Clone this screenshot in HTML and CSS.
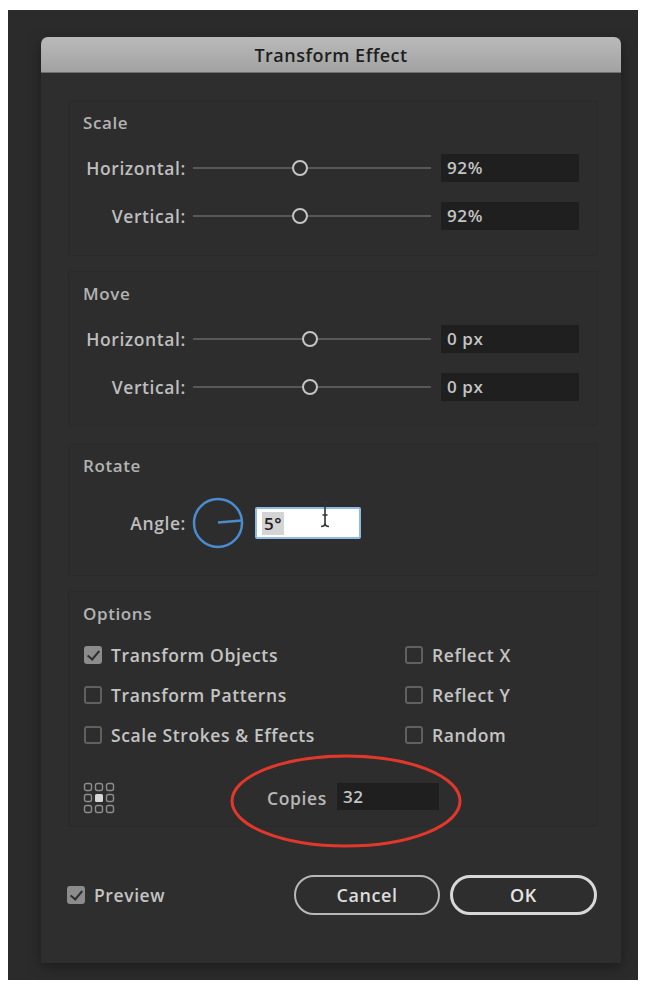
FILE: index.html
```html
<!DOCTYPE html>
<html lang="en">
<head>
  <meta charset="UTF-8" />
  <title>Transform Effect</title>
  <link rel="stylesheet" href="styles.css">
</head>
<body>

  <div class="frame">
    <div class="dialog">
      <div class="titlebar">Transform Effect</div>

      <div class="content">

        <!-- Scale -->
        <section class="panel panel-scale">
          <div class="panel-title">Scale</div>
          <div class="row">
            <span class="row-label">Horizontal:</span>
            <div class="slider"><span class="thumb" style="left: 45%"></span></div>
            <div class="field">92%</div>
          </div>
          <div class="row">
            <span class="row-label">Vertical:</span>
            <div class="slider"><span class="thumb" style="left: 45%"></span></div>
            <div class="field">92%</div>
          </div>
        </section>

        <!-- Move -->
        <section class="panel panel-move">
          <div class="panel-title">Move</div>
          <div class="row">
            <span class="row-label">Horizontal:</span>
            <div class="slider"><span class="thumb" style="left: 49%"></span></div>
            <div class="field">0 px</div>
          </div>
          <div class="row">
            <span class="row-label">Vertical:</span>
            <div class="slider"><span class="thumb" style="left: 49%"></span></div>
            <div class="field">0 px</div>
          </div>
        </section>

        <!-- Rotate -->
        <section class="panel panel-rotate">
          <div class="panel-title">Rotate</div>
          <div class="angle-row">
            <span class="row-label">Angle:</span>
            <svg class="dial" width="52" height="52" viewBox="0 0 52 52">
              <circle cx="26" cy="26" r="24" fill="none" stroke="#4b8bd0" stroke-width="2.5"/>
              <line x1="26" y1="25.5" x2="50" y2="23.5" stroke="#4b8bd0" stroke-width="2.5"/>
            </svg>
            <div class="angle-field">
              <span class="selected">5°</span>
              <svg class="ibeam" width="12" height="28" viewBox="0 0 12 28">
                <path d="M2 1.5 Q6 1.5 6 5 Q6 1.5 10 1.5 M6 5 V23 M2 26.5 Q6 26.5 6 23 Q6 26.5 10 26.5 M3.5 15 H8.5" fill="none" stroke="#333" stroke-width="1.6"/>
              </svg>
            </div>
          </div>
        </section>

        <!-- Options -->
        <section class="panel panel-options">
          <div class="panel-title">Options</div>
          <div class="options-grid">
            <label class="check"><span class="box checked"></span>Transform Objects</label>
            <label class="check"><span class="box"></span>Reflect X</label>
            <label class="check"><span class="box"></span>Transform Patterns</label>
            <label class="check"><span class="box"></span>Reflect Y</label>
            <label class="check"><span class="box"></span>Scale Strokes &amp; Effects</label>
            <label class="check"><span class="box"></span>Random</label>
          </div>
          <div class="copies-row">
            <svg class="ref-point" width="32" height="32" viewBox="0 0 32 32">
              <g fill="none" stroke="#8d8d8d" stroke-width="1.4">
                <rect x="1.5" y="1.5" width="7" height="7" rx="2"/>
                <rect x="12.5" y="1.5" width="7" height="7" rx="2"/>
                <rect x="23.5" y="1.5" width="7" height="7" rx="2"/>
                <rect x="1.5" y="12.5" width="7" height="7" rx="2"/>
                <rect x="23.5" y="12.5" width="7" height="7" rx="2"/>
                <rect x="1.5" y="23.5" width="7" height="7" rx="2"/>
                <rect x="12.5" y="23.5" width="7" height="7" rx="2"/>
                <rect x="23.5" y="23.5" width="7" height="7" rx="2"/>
              </g>
              <rect x="12" y="12" width="8" height="8" rx="1.5" fill="#d6d6d6"/>
            </svg>
            <span class="copies-label">Copies</span>
            <div class="field copies-field">32</div>
            <svg class="annotation" width="236" height="98" viewBox="0 0 236 98">
              <ellipse cx="118" cy="49" rx="114" ry="45" fill="none" stroke="#e2382c" stroke-width="3"/>
            </svg>
          </div>
        </section>

        <!-- Footer -->
        <div class="footer">
          <label class="check preview"><span class="box checked"></span>Preview</label>
          <div class="buttons">
            <button class="btn">Cancel</button>
            <button class="btn btn-default">OK</button>
          </div>
        </div>

      </div>
    </div>
  </div>

</body>
</html>
```

FILE: styles.css
```css
* {
  box-sizing: border-box;
}

body {
  margin: 0;
  background: #ffffff;
  font-family: 'Open Sans', 'DejaVu Sans', sans-serif;
  font-weight: 600;
  letter-spacing: 0.6px;
  color: #c4c4c4;
}

.frame {
  margin: 10px 0 0 8px;
  width: 630px;
  height: 970px;
  padding: 27px 0 0 33px;
  background: #2b2b2b;
}

.dialog {
  width: 580px;
  height: 926px;
  background: #2e2e2e;
  box-shadow: 0 4px 12px rgba(0, 0, 0, 0.35);
  display: flex;
  flex-direction: column;
}

.titlebar {
  height: 36px;
  border-radius: 7px 7px 0 0;
  background: linear-gradient(#bababa, #a2a2a2);
  border-bottom: 1px solid #6f6f6f;
  color: #1e1e1e;
  font-size: 18px;
  letter-spacing: 0.5px;
  line-height: 36px;
  text-align: center;
}

.content {
  padding: 27px 23px 0 27px;
  flex: 1;
  display: flex;
  flex-direction: column;
}

/* Panels */
.panel {
  border: 1px solid #2a2a2a;
  border-radius: 3px;
  background: #2d2d2d;
  padding: 11px 0 0 14px;
}

.panel-title {
  font-size: 17px;
  line-height: 22px;
  color: #b3b3b3;
}

.panel-scale {
  height: 156px;
}

.panel-move {
  margin-top: 15px;
  height: 155px;
}

.panel-rotate {
  margin-top: 17px;
  height: 133px;
}

.panel-options {
  margin-top: 15px;
  height: 236px;
}

.row {
  display: flex;
  align-items: center;
  height: 28px;
  margin-top: 20px;
}

.row-label {
  width: 103px;
  text-align: right;
  font-size: 17.5px;
  white-space: nowrap;
  color: #bebebe;
}

.slider {
  position: relative;
  width: 238px;
  height: 2px;
  margin-left: 7px;
  background: #585858;
}

.thumb {
  position: absolute;
  top: -7px;
  width: 16px;
  height: 16px;
  margin-left: -8px;
  border: 2px solid #c4c4c4;
  border-radius: 50%;
  background: #2e2e2e;
}

.field {
  width: 138px;
  height: 28px;
  margin-left: 10px;
  padding-left: 6px;
  background: #1f1f1f;
  font-size: 17px;
  line-height: 28px;
  color: #c4c4c4;
}

/* Rotate */
.angle-row {
  display: flex;
  align-items: center;
  margin-top: 20px;
}

.dial {
  margin-left: 6px;
}

.angle-field {
  position: relative;
  width: 106px;
  height: 32px;
  margin-left: 11px;
  padding: 3px 0 0 5px;
  background: #ffffff;
  border: 2px solid #8fb9e6;
  border-radius: 2px;
  font-size: 17px;
  line-height: 24px;
  color: #222;
}

.selected {
  background: #d4d4d4;
  padding: 0 2px;
}

.ibeam {
  position: absolute;
  left: 62px;
  top: -9px;
}

/* Options */
.options-grid {
  display: grid;
  grid-template-columns: 321px 1fr;
  row-gap: 16px;
  margin-top: 18px;
  padding-left: 1px;
}

.check {
  display: flex;
  align-items: center;
  gap: 9px;
  height: 24px;
  font-size: 17.5px;
  white-space: nowrap;
  color: #c4c4c4;
}

.box {
  position: relative;
  flex: none;
  width: 18px;
  height: 18px;
  border: 2px solid #606060;
  border-radius: 3px;
}

.box.checked {
  background: #8c8c8c;
  border-color: #8c8c8c;
}

.box.checked::after {
  content: "";
  position: absolute;
  left: 4px;
  top: 0;
  width: 5px;
  height: 10px;
  border: solid #2e2e2e;
  border-width: 0 2.5px 2.5px 0;
  transform: rotate(40deg);
}

.copies-row {
  position: relative;
  display: flex;
  align-items: center;
  margin-top: 35px;
  height: 32px;
}

.copies-label {
  width: 62px;
  margin-left: 152px;
  font-size: 17.5px;
  white-space: nowrap;
  color: #b8b8b8;
}

.copies-field {
  width: 102px;
  height: 27px;
  margin-left: 8px;
  line-height: 27px;
  margin-top: -3px;
}

.annotation {
  position: absolute;
  left: 145px;
  top: -30px;
}

/* Footer */
.footer {
  display: flex;
  align-items: center;
  justify-content: space-between;
  margin: 48px 1px 0 -1px;
}

.buttons {
  display: flex;
  gap: 10px;
}

.btn {
  width: 146px;
  height: 40px;
  border: 2px solid #b8b8b8;
  border-radius: 20px;
  background: transparent;
  font-family: 'Open Sans', 'DejaVu Sans', sans-serif;
  font-weight: 600;
  letter-spacing: 0.6px;
  font-size: 18px;
  color: #dcdcdc;
}

.btn-default {
  width: 147px;
  border: 3px solid #d8d8d8;
  color: #e6e6e6;
}
```
